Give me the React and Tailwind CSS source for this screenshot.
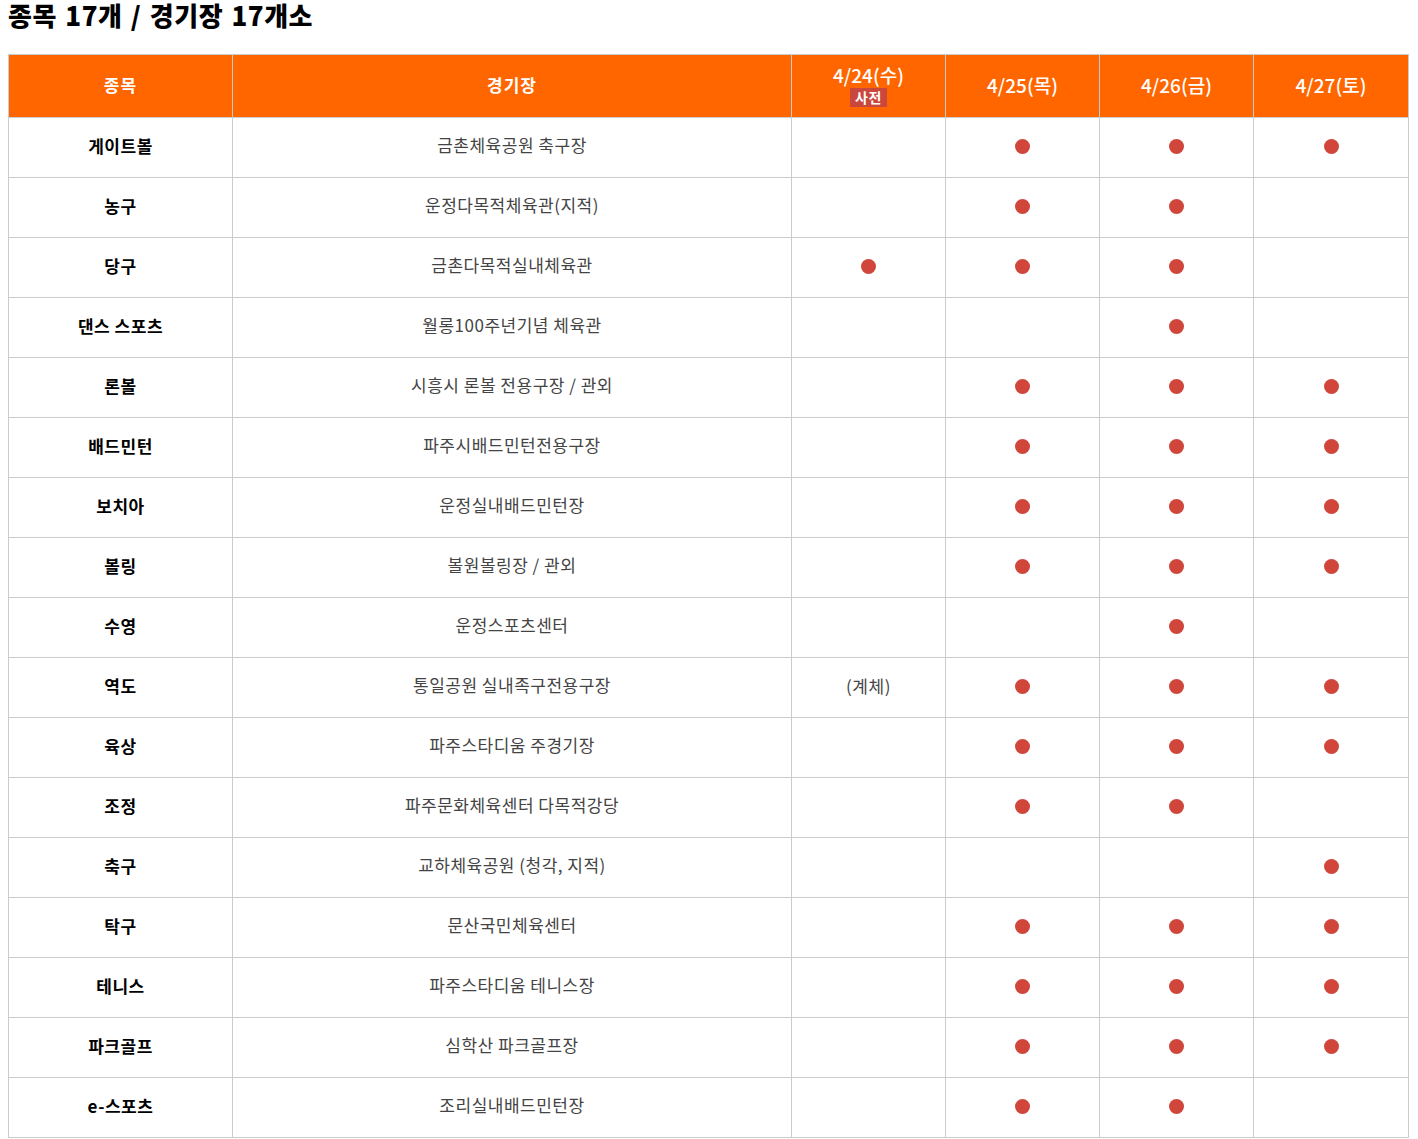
import React from "react";

const rows = [
  ["게이트볼", "금촌체육공원 축구장", "", 1, 1, 1],
  ["농구", "운정다목적체육관(지적)", "", 1, 1, 0],
  ["당구", "금촌다목적실내체육관", 1, 1, 1, 0],
  ["댄스 스포츠", "월롱100주년기념 체육관", "", 0, 1, 0],
  ["론볼", "시흥시 론볼 전용구장 / 관외", "", 1, 1, 1],
  ["배드민턴", "파주시배드민턴전용구장", "", 1, 1, 1],
  ["보치아", "운정실내배드민턴장", "", 1, 1, 1],
  ["볼링", "볼원볼링장 / 관외", "", 1, 1, 1],
  ["수영", "운정스포츠센터", "", 0, 1, 0],
  ["역도", "통일공원 실내족구전용구장", "(계체)", 1, 1, 1],
  ["육상", "파주스타디움 주경기장", "", 1, 1, 1],
  ["조정", "파주문화체육센터 다목적강당", "", 1, 1, 0],
  ["축구", "교하체육공원 (청각, 지적)", "", 0, 0, 1],
  ["탁구", "문산국민체육센터", "", 1, 1, 1],
  ["테니스", "파주스타디움 테니스장", "", 1, 1, 1],
  ["파크골프", "심학산 파크골프장", "", 1, 1, 1],
  ["e-스포츠", "조리실내배드민턴장", "", 1, 1, 0],
];

const Dot = () => (
  <span className="block mx-auto w-[15px] h-[15px] rounded-full bg-[#d0463b] -translate-y-[1px]" />
);

const Cell = ({ v }) => {
  if (v === 1) return <Dot />;
  if (typeof v === "string" && v)
    return <span className="block -translate-y-[2px]">{v}</span>;
  return null;
};

export default function App() {
  return (
    <div
      className="bg-white px-2 pb-2"
      style={{ fontFamily: '"Noto Sans CJK KR", "Noto Sans", sans-serif' }}
    >
      <h2 className="text-[26px] font-black leading-[30px] text-black tracking-[0.5px] [word-spacing:2px] mb-[24px]">
        종목 17개 / 경기장 17개소
      </h2>
      <table className="w-[1400px] border-collapse table-fixed text-center">
        <colgroup>
          <col className="w-[224px]" />
          <col className="w-[559px]" />
          <col className="w-[154px]" />
          <col className="w-[154px]" />
          <col className="w-[154px]" />
          <col className="w-[155px]" />
        </colgroup>
        <thead>
          <tr className="bg-[#ff6600] text-white h-[63px]">
            <th className="border border-[#cccccc] text-[17px] font-bold tracking-[1px] pb-[2px]">종목</th>
            <th className="border border-[#cccccc] text-[17px] font-bold tracking-[1px] pb-[2px]">경기장</th>
            <th className="border border-[#cccccc] text-[19px] font-medium leading-[20px]">
              <div className="flex flex-col items-center">
                <span>4/24(수)</span>
                <span className="mt-[3px] bg-[#c9473b] text-white text-[14px] font-bold leading-[19px] px-[5px] tracking-[0.5px]">
                  사전
                </span>
              </div>
            </th>
            <th className="border border-[#cccccc] text-[19px] font-medium pb-[2px]">4/25(목)</th>
            <th className="border border-[#cccccc] text-[19px] font-medium pb-[2px]">4/26(금)</th>
            <th className="border border-[#cccccc] text-[19px] font-medium pb-[2px]">4/27(토)</th>
          </tr>
        </thead>
        <tbody>
          {rows.map((r, i) => (
            <tr key={i} className="h-[60px]">
              <td className="border border-[#cccccc] text-[17px] font-bold text-black tracking-[0.5px] pb-[4px]">{r[0]}</td>
              <td className="border border-[#cccccc] text-[17px] text-[#444444] tracking-[0.5px] pb-[5px]">{r[1]}</td>
              <td className="border border-[#cccccc] text-[17px] text-[#444444] tracking-[0.5px]"><Cell v={r[2]} /></td>
              <td className="border border-[#cccccc]"><Cell v={r[3]} /></td>
              <td className="border border-[#cccccc]"><Cell v={r[4]} /></td>
              <td className="border border-[#cccccc]"><Cell v={r[5]} /></td>
            </tr>
          ))}
        </tbody>
      </table>
    </div>
  );
}
